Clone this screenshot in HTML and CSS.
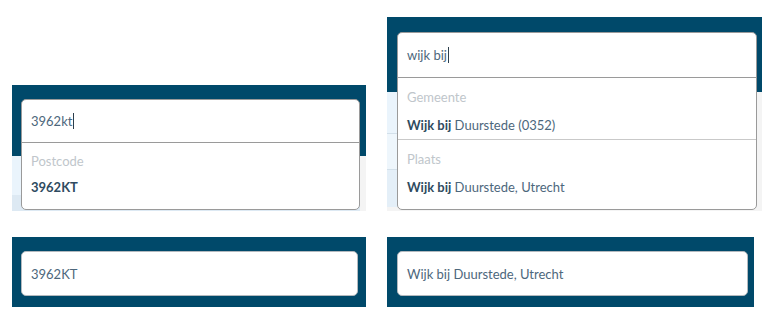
FILE: index.html
```html
<!DOCTYPE html>
<html lang="nl">

<head>
  <meta charset="UTF-8">
  <meta name="viewport" content="width=device-width, initial-scale=1.0">
  <title>Zoeken op locatie</title>
  <link rel="stylesheet" href="styles.css">
</head>

<body>
  <main class="board">
    <!-- postcode search, open list -->
    <section class="shot shot-postcode">
      <div class="combo">
        <div class="combo-input">3962kt<span class="caret"></span></div>
        <div class="combo-list">
          <div class="group">
            <div class="group-label">Postcode</div>
            <div class="option"><b>3962KT</b></div>
          </div>
        </div>
      </div>
    </section>

    <!-- place search, open list -->
    <section class="shot shot-place">
      <div class="combo">
        <div class="combo-input">wijk bij<span class="caret"></span></div>
        <div class="combo-list">
          <div class="group">
            <div class="group-label">Gemeente</div>
            <div class="option"><b>Wijk bij</b> Duurstede (0352)</div>
          </div>
          <div class="group">
            <div class="group-label">Plaats</div>
            <div class="option"><b>Wijk bij</b> Duurstede, Utrecht</div>
          </div>
        </div>
      </div>
    </section>

    <!-- chosen values -->
    <section class="shot shot-chosen">
      <div class="field">3962KT</div>
    </section>

    <section class="shot shot-chosen shot-chosen-wide">
      <div class="field">Wijk bij Duurstede, Utrecht</div>
    </section>
  </main>
</body>

</html>
```

FILE: styles.css
```css
body {
  margin: 0;
  background-color: #ffffff;
  font-family: Lato, "Open Sans", sans-serif;
  font-size: 13px;
  color: #4d677c;
}

.board {
  display: grid;
  grid-template-columns: 354px 375px;
  column-gap: 21px;
  row-gap: 26px;
  align-items: end;
  padding: 17px 0 0 12px;
}

.shot {
  background-color: #00496a;
}

.shot-postcode {
  padding: 14px 6px 1px 9px;
  background:
    linear-gradient(#00496a, #00496a) top / 100% 71px no-repeat,
    linear-gradient(to left, #f4f4f4 6px, transparent 6px),
    linear-gradient(#eaf4fc 0 110px, #dde9f3 110px);
}

.shot-place {
  padding: 15px 5px 1px 10px;
  background:
    linear-gradient(#00496a, #00496a) top / 100% 75px no-repeat,
    linear-gradient(to left, #f4f4f4 5px, transparent 5px),
    linear-gradient(#eaf4fc 0 116px, #d3e0ea 116px 117px, #eef6fc 117px 152px, #d3e0ea 152px 153px, #e4eff8 153px 190px, #f4f4f4 190px);
}

.combo {
  background-color: #ffffff;
  border: 1px solid #9a9a9a;
  border-radius: 5px;
}

.combo-input {
  display: flex;
  align-items: center;
  height: 44px;
  padding-left: 9px;
  border-bottom: 1px solid #9a9a9a;
}

.shot-postcode .combo-input {
  height: 42px;
}

.caret {
  width: 1px;
  height: 16px;
  margin-left: 1px;
  background-color: #2c3e4c;
}

.group {
  padding: 9px 9px 4px;
}

.group + .group {
  border-top: 1px solid #c9c9c9;
}

.group:last-child {
  padding-bottom: 12px;
}

.shot-postcode .group {
  padding-top: 8px;
  padding-bottom: 12px;
}

.group-label {
  line-height: 20px;
  color: #c0c6cb;
}

.option {
  margin-top: 8px;
  line-height: 20px;
  color: #4d677c;
}

.shot-postcode .option {
  margin-top: 6px;
}

.option b {
  font-weight: 700;
  color: #2f4b60;
}

.shot-chosen {
  width: 354px;
  box-sizing: border-box;
  padding: 14px 8px 11px 9px;
}

.shot-chosen-wide {
  width: 367px;
  padding: 14px 6px 11px 10px;
}

.field {
  display: flex;
  align-items: center;
  height: 43px;
  padding-left: 9px;
  background-color: #ffffff;
  border: 1px solid #b3b9be;
  border-radius: 5px;
}
```
